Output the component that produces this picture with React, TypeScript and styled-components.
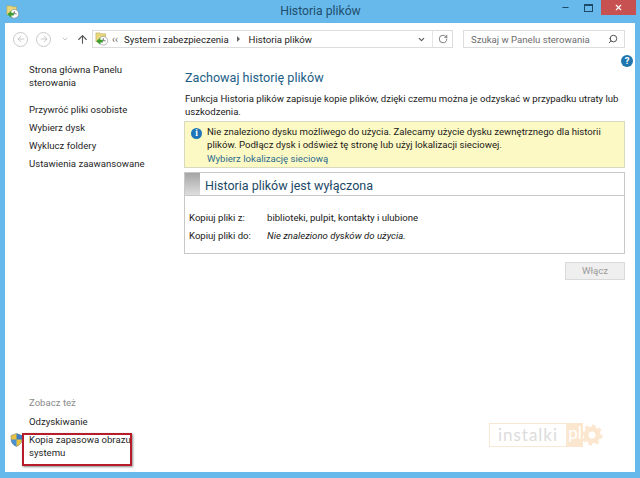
import styled, { createGlobalStyle } from 'styled-components'
import { ArrowLeft, ArrowRight, ArrowUp, ChevronDown, RotateCw, Search, Minus, X } from 'lucide-react'

const GlobalStyle = createGlobalStyle`
  html, body {
    margin: 0;
    padding: 0;
    background: #66b9ea;
  }
  * {
    box-sizing: border-box;
  }
`

const Window = styled.div`
  width: 640px;
  height: 478px;
  display: flex;
  flex-direction: column;
  background: #66b9ea;
  font-family: Roboto, Lato, sans-serif;
  font-size: 9.6px;
  color: #1a1a1a;
  overflow: hidden;
`

const TitleBar = styled.div`
  height: 23px;
  flex: none;
  display: flex;
  align-items: center;
  position: relative;
  padding-left: 6px;
`

const Title = styled.div`
  flex: 1;
  text-align: center;
  font-size: 12.2px;
  color: #1f4e6e;
  margin-top: -1px;
  padding-left: 66px;
`

const WinButtons = styled.div`
  display: flex;
  align-items: flex-start;
  align-self: flex-start;
  margin-right: 4px;
`

const WinButton = styled.div<{ $w: number; $close?: boolean }>`
  width: ${({ $w }) => $w}px;
  height: 15px;
  display: flex;
  align-items: center;
  justify-content: center;
  color: ${({ $close }) => ($close ? '#fff' : '#1c4a68')};
  background: ${({ $close }) => ($close ? '#c75050' : 'transparent')};
`

const MaxIcon = styled.div`
  width: 9px;
  height: 8px;
  border: 1px solid #1c4a68;
  border-top-width: 2px;
`

const Body = styled.div`
  flex: 1;
  margin: 0 5px 6px 5px;
  background: #fff;
  display: flex;
  flex-direction: column;
  position: relative;
`

const Toolbar = styled.div`
  height: 34px;
  flex: none;
  display: flex;
  align-items: center;
  padding: 0 10px 0 8px;
  margin-top: -1px;
`

const NavCircle = styled.div`
  width: 15px;
  height: 15px;
  border-radius: 50%;
  border: 1px solid #c9c9c9;
  color: #bdbdbd;
  display: flex;
  align-items: center;
  justify-content: center;
  margin-right: 8px;
`

const NavDrop = styled.div`
  width: 12px;
  color: #c4c4c4;
  display: flex;
  justify-content: center;
  margin-right: 4px;
`

const NavUp = styled.div`
  width: 14px;
  color: #555;
  display: flex;
  justify-content: center;
  margin-right: 3px;
`

const AddressBar = styled.div`
  width: 361px;
  height: 18px;
  border: 1px solid #dcdcdc;
  display: flex;
  align-items: center;
  padding-left: 2px;
`

const Crumb = styled.span`
  color: #222;
  white-space: nowrap;
`

const CrumbMuted = styled.span`
  color: #666;
  margin: 0 6px 0 3px;
  font-size: 10px;
`

const CrumbSep = styled.span`
  width: 0;
  height: 0;
  border-left: 3px solid #666;
  border-top: 3px solid transparent;
  border-bottom: 3px solid transparent;
  margin: 0 9px 0 8px;
`

const AddressEnd = styled.div`
  margin-left: auto;
  display: flex;
  align-items: center;
  height: 100%;
`

const AddressDrop = styled.div`
  color: #555;
  width: 21px;
  display: flex;
  justify-content: center;
`

const AddressRefresh = styled.div`
  width: 20px;
  height: 100%;
  border-left: 1px solid #e4e4e4;
  color: #666;
  display: flex;
  align-items: center;
  justify-content: center;
`

const SearchBox = styled.div`
  width: 162px;
  height: 18px;
  margin-left: 10px;
  border: 1px solid #dcdcdc;
  display: flex;
  align-items: center;
  justify-content: space-between;
  padding: 0 6px 0 7px;
  color: #6d6d6d;
  white-space: nowrap;
`

const Columns = styled.div`
  flex: 1;
  display: flex;
  min-height: 0;
`

const Sidebar = styled.div`
  width: 179px;
  flex: none;
  padding: 7px 0 8px 24px;
  display: flex;
  flex-direction: column;
  justify-content: space-between;
`

const SideGroup = styled.div`
  display: flex;
  flex-direction: column;
`

const SideLink = styled.div<{ $muted?: boolean; $gap?: number }>`
  line-height: 13px;
  margin-bottom: ${({ $gap }) => $gap ?? 5}px;
  width: 125px;
  color: ${({ $muted }) => ($muted ? '#8a8a8a' : '#1f1f1f')};
`

const ShieldLink = styled.div`
  position: relative;
`

const ShieldIcon = styled.svg`
  position: absolute;
  left: -19px;
  top: 0;
`

const RedFrame = styled.div`
  position: absolute;
  left: 17px;
  top: 410px;
  width: 110px;
  height: 33px;
  border: 2px solid #b71c2b;
  box-shadow: 1px 1px 2px rgba(0, 0, 0, 0.45);
`

const Main = styled.div`
  flex: 1;
  padding: 13px 10px 0 1px;
  position: relative;
`

const HelpBadge = styled.div`
  position: absolute;
  top: -1px;
  right: 2px;
  width: 12px;
  height: 12px;
  border-radius: 50%;
  background: #1f75ad;
  color: #fff;
  font-size: 9.5px;
  font-weight: 700;
  line-height: 12px;
  text-align: center;
`

const Heading = styled.h1`
  margin: 0 0 5px;
  font-size: 12.6px;
  font-weight: 400;
  line-height: 18px;
  color: #1c5e86;
`

const Intro = styled.p`
  margin: 0 0 3px;
  line-height: 13px;
`

const Notice = styled.div`
  height: 47px;
  margin-left: -1px;
  background: #fdf9c4;
  border: 1px solid #d9d9c0;
  padding: 4px 6px;
  display: flex;
  gap: 5px;
  margin-bottom: 4px;
`

const InfoIcon = styled.div`
  width: 11px;
  height: 11px;
  flex: none;
  margin-top: 2px;
  border-radius: 50%;
  background: #1e74b8;
  color: #fff;
  font-family: "Liberation Serif", serif;
  font-weight: 700;
  font-size: 9.5px;
  line-height: 11px;
  text-align: center;
`

const NoticeText = styled.div`
  line-height: 12.5px;
`

const NoticeLink = styled.div`
  color: #2a6a8f;
  margin-top: 2px;
`

const StatusCard = styled.div`
  height: 82px;
  margin-left: -1px;
  border: 1px solid #c8c8c8;
`

const StatusHead = styled.div`
  height: 23px;
  display: flex;
  align-items: stretch;
  border-bottom: 1px solid #c8c8c8;
`

const StatusSwatch = styled.div`
  width: 15px;
  background: linear-gradient(#a4a4a4, #dedede);
`

const StatusTitle = styled.div`
  padding-left: 5px;
  font-size: 12.5px;
  line-height: 25px;
  color: #1c4966;
`

const StatusRows = styled.div`
  padding: 15px 4px 0;
  display: grid;
  grid-template-columns: 78px 1fr;
  row-gap: 5px;
  line-height: 13px;
`

const StatusValue = styled.div<{ $italic?: boolean }>`
  font-style: ${({ $italic }) => ($italic ? 'italic' : 'normal')};
`

const ActionRow = styled.div`
  display: flex;
  justify-content: flex-end;
  margin-top: 8px;
`

const TurnOnButton = styled.div`
  width: 60px;
  height: 18px;
  background: #efefef;
  border: 1px solid #d9d9d9;
  color: #9a9a9a;
  text-align: center;
  line-height: 16px;
`

const Watermark = styled.div`
  position: absolute;
  left: 484px;
  top: 400px;
  display: flex;
  align-items: center;
  height: 24px;
`

const MarkWord = styled.div`
  height: 24px;
  width: 78px;
  border: 1px solid #f9e8d2;
  color: #dcdcdc;
  font-family: Lato, sans-serif;
  font-size: 17px;
  letter-spacing: 1px;
  line-height: 22px;
  text-align: center;
`

const MarkTld = styled.div`
  height: 24px;
  width: 16px;
  background: #fbe7cf;
  color: #fff;
  font-family: Lato, sans-serif;
  font-size: 17px;
  line-height: 19px;
  text-align: center;
`

const AppGlyph = ({ size }: { size: number }) => (
  <svg width={size} height={size} viewBox="0 0 16 16">
    <path d="M1 1h5l1 1h5v9H1z" fill="#e9d77c" stroke="#b9a550" strokeWidth="0.6" />
    <circle cx="9.500" cy="10" r="5" fill="#fff" stroke="#888" strokeWidth="0.7" />
    <path d="M9.500 7v3h2.600" fill="none" stroke="#555" strokeWidth="0.9" />
    <path d="M1.500 10.500 6 6.500v2.400h3v3.200H6v2.400z" fill="#3f9e2f" />
  </svg>
)

const App = () => {
  return (
    <Window>
      <GlobalStyle />
      <TitleBar>
        <AppGlyph size={14} />
        <Title>Historia plików</Title>
        <WinButtons>
          <WinButton $w={21}>
            <Minus size={9} strokeWidth={3} />
          </WinButton>
          <WinButton $w={25}>
            <MaxIcon />
          </WinButton>
          <WinButton $w={35} $close>
            <X size={9} strokeWidth={3} />
          </WinButton>
        </WinButtons>
      </TitleBar>
      <Body>
        <Toolbar>
          <NavCircle>
            <ArrowLeft size={10} strokeWidth={2} />
          </NavCircle>
          <NavCircle>
            <ArrowRight size={10} strokeWidth={2} />
          </NavCircle>
          <NavDrop>
            <ChevronDown size={8} strokeWidth={3} />
          </NavDrop>
          <NavUp>
            <ArrowUp size={13} strokeWidth={2} />
          </NavUp>
          <AddressBar>
            <AppGlyph size={14} />
            <CrumbMuted>‹‹</CrumbMuted>
            <Crumb>System i zabezpieczenia</Crumb>
            <CrumbSep />
            <Crumb>Historia plików</Crumb>
            <AddressEnd>
              <AddressDrop>
                <ChevronDown size={9} strokeWidth={3} />
              </AddressDrop>
              <AddressRefresh>
                <RotateCw size={10} strokeWidth={2} />
              </AddressRefresh>
            </AddressEnd>
          </AddressBar>
          <SearchBox>
            Szukaj w Panelu sterowania
            <Search size={10} strokeWidth={2.4} color="#555" style={{ transform: 'scaleX(-1)' }} />
          </SearchBox>
        </Toolbar>
        <Columns>
          <Sidebar>
            <SideGroup>
              <SideLink $gap={14}>Strona główna Panelu sterowania</SideLink>
              <SideLink>Przywróć pliki osobiste</SideLink>
              <SideLink>Wybierz dysk</SideLink>
              <SideLink>Wyklucz foldery</SideLink>
              <SideLink>Ustawienia zaawansowane</SideLink>
            </SideGroup>
            <SideGroup>
              <SideLink $muted $gap={6}>Zobacz też</SideLink>
              <SideLink $gap={5}>Odzyskiwanie</SideLink>
              <ShieldLink>
                <ShieldIcon width="13" height="14" viewBox="0 0 13 14">
                  <path d="M6.500 0.500 12 2.500v4c0 3.400-2.400 5.800-5.500 7C3.400 12.300 1 9.900 1 6.500v-4z" fill="#e9c33d" stroke="#7a8a96" strokeWidth="0.6" />
                  <path d="M6.500 0.500 12 2.500v4H6.500z" fill="#3d7fc4" />
                  <path d="M1 6.500h5.500v7C3.400 12.300 1 9.900 1 6.500z" fill="#4a90d0" />
                </ShieldIcon>
                <SideLink>Kopia zapasowa obrazu systemu</SideLink>
              </ShieldLink>
            </SideGroup>
          </Sidebar>
          <Main>
            <HelpBadge>?</HelpBadge>
            <Heading>Zachowaj historię plików</Heading>
            <Intro>
              Funkcja Historia plików zapisuje kopie plików, dzięki czemu można je odzyskać w przypadku utraty lub
              uszkodzenia.
            </Intro>
            <Notice>
              <InfoIcon>i</InfoIcon>
              <NoticeText>
                Nie znaleziono dysku możliwego do użycia. Zalecamy użycie dysku zewnętrznego dla historii plików.
                Podłącz dysk i odśwież tę stronę lub użyj lokalizacji sieciowej.
                <NoticeLink>Wybierz lokalizację sieciową</NoticeLink>
              </NoticeText>
            </Notice>
            <StatusCard>
              <StatusHead>
                <StatusSwatch />
                <StatusTitle>Historia plików jest wyłączona</StatusTitle>
              </StatusHead>
              <StatusRows>
                <div>Kopiuj pliki z:</div>
                <StatusValue>biblioteki, pulpit, kontakty i ulubione</StatusValue>
                <div>Kopiuj pliki do:</div>
                <StatusValue $italic>Nie znaleziono dysków do użycia.</StatusValue>
              </StatusRows>
            </StatusCard>
            <ActionRow>
              <TurnOnButton>Włącz</TurnOnButton>
            </ActionRow>
          </Main>
        </Columns>
        <RedFrame />
        <Watermark>
          <MarkWord>instalki</MarkWord>
          <MarkTld>pl</MarkTld>
          <svg width="24" height="24" viewBox="0 0 24 24">
            <circle cx="9" cy="12" r="6" fill="none" stroke="#fbe7cf" strokeWidth="5" />
            <circle cx="9" cy="12" r="9" fill="none" stroke="#fbe7cf" strokeWidth="3" strokeDasharray="3.500 3.500" />
          </svg>
        </Watermark>
      </Body>
    </Window>
  )
}

export default App
